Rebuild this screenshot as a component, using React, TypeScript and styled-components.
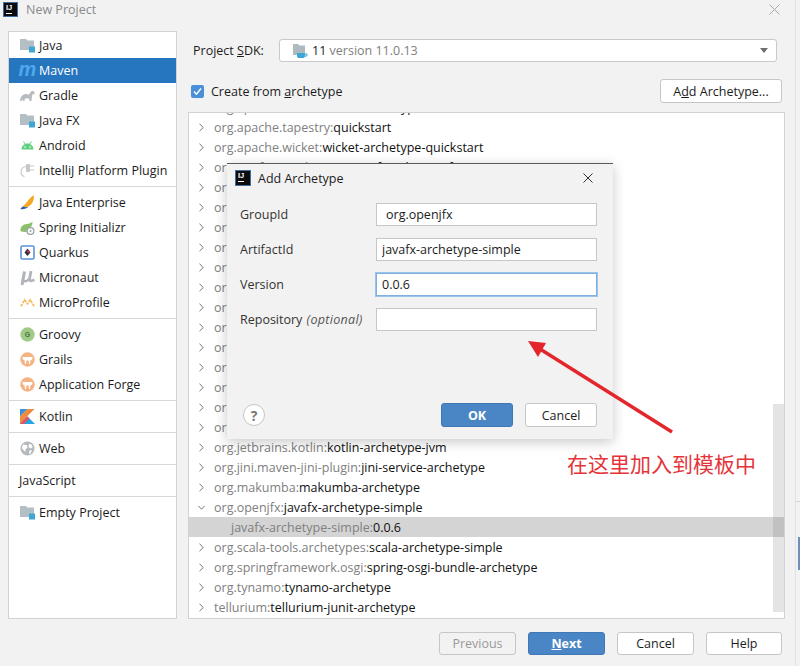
import React from "react";
import styled, { createGlobalStyle } from "styled-components";

const GlobalStyle = createGlobalStyle`
  html, body {
    margin: 0;
    padding: 0;
    background: #f2f2f2;
  }
  body {
    font-family: "Open Sans", "Noto Sans", "Noto Sans CJK SC", sans-serif;
    font-size: 12.5px;
    color: #1c1c1c;
  }
`;

const Page = styled.div`
  position: relative;
  display: flex;
  width: 800px;
  height: 666px;
  overflow: hidden;
`;
const Win = styled.div`
  width: 795px;
  flex: none;
  display: flex;
  flex-direction: column;
  border-right: 1px solid #e2e2e2;
`;
const Edge = styled.div`
  flex: 1;
  background:
    linear-gradient(#6f8fb8, #6f8fb8) right 537px / 2px 33px no-repeat,
    linear-gradient(#d6d6d6, #d6d6d6) 0 501px / 100% 1px no-repeat;
`;
const TitleBar = styled.div`
  height: 31px;
  flex: none;
  display: flex;
  align-items: flex-start;
  padding: 2px 0 0 3px;
  box-sizing: border-box;
  justify-content: space-between;
`;
const TitleLeft = styled.div`
  display: flex;
  align-items: center;
  gap: 8px;
  color: #8a8a8a;
  line-height: 14px;
`;
const CloseBtn = styled.svg`
  width: 11px;
  height: 11px;
  margin: 2px 15px 0 0;
`;
const LogoBox = styled.div`
  width: 15px;
  height: 15px;
  box-sizing: border-box;
  background: #0c0c10;
  border: 1px solid #3f6f9f;
  color: #fff;
  font: bold 7.5px/7px "Liberation Sans", sans-serif;
  padding: 1px 0 0 2px;
  flex: none;
  &::after {
    content: "";
    display: block;
    width: 6px;
    height: 1px;
    background: #fff;
    margin-top: 2px;
  }
`;
const Body = styled.div`
  display: flex;
  height: 588px;
  flex: none;
  padding-left: 8px;
`;
const Sidebar = styled.div`
  width: 169px;
  box-sizing: border-box;
  background: #fff;
  border: 1px solid #d2d2d2;
  padding-top: 1px;
`;
const SideRow = styled.div<{ $active?: boolean; $plain?: boolean }>`
  height: 25px;
  display: flex;
  align-items: center;
  padding-left: ${(p) => (p.$plain ? "10px" : "11px")};
  background: ${(p) => (p.$active ? "#2675bf" : "transparent")};
  color: ${(p) => (p.$active ? "#fff" : "#1c1c1c")};
`;
const IconSlot = styled.span`
  width: 15px;
  height: 15px;
  margin-right: 4px;
  display: inline-flex;
  align-items: center;
  justify-content: center;
`;
const SideSep = styled.div`
  height: 1px;
  background: #d8d8d8;
  margin: 3px 0;
`;
const Main = styled.div`
  flex: 1;
  display: flex;
  flex-direction: column;
  padding: 8px 10px 0 11px;
  min-width: 0;
`;
const SdkRow = styled.div`
  display: flex;
  align-items: center;
  height: 23px;
  flex: none;
  padding: 0 8px 0 5px;
`;
const SdkLabel = styled.span`
  width: 86px;
`;
const Combo = styled.div`
  flex: 1;
  height: 23px;
  box-sizing: border-box;
  background: #fff;
  border: 1px solid #c9c9c9;
  border-radius: 3px;
  display: flex;
  align-items: center;
  padding: 0 8px 0 13px;
  gap: 4px;
`;
const Muted = styled.span`
  color: #808080;
`;
const ComboCaret = styled.span`
  margin-left: auto;
  width: 0;
  height: 0;
  border-left: 4px solid transparent;
  border-right: 4px solid transparent;
  border-top: 5px solid #6e6e6e;
`;
const ArchetypeRow = styled.div`
  display: flex;
  align-items: center;
  justify-content: space-between;
  margin-top: 17px;
  height: 24px;
  flex: none;
  padding: 0 3px 0 3px;
`;
const CheckLabel = styled.label`
  display: flex;
  align-items: center;
  gap: 7px;
`;
const CheckBox = styled.span`
  width: 13px;
  height: 13px;
  border-radius: 2px;
  background: #4a90d9;
  display: inline-flex;
  align-items: center;
  justify-content: center;
`;
const Button = styled.div<{ $primary?: boolean; $disabled?: boolean; $w?: number; $h?: number }>`
  width: ${(p) => p.$w ?? 77}px;
  height: ${(p) => p.$h ?? 23}px;
  box-sizing: border-box;
  border-radius: 3px;
  display: flex;
  align-items: center;
  justify-content: center;
  background: ${(p) => (p.$primary ? "#4a86c5" : p.$disabled ? "#f2f2f2" : "#fff")};
  border: 1px solid ${(p) => (p.$primary ? "#3f78b4" : "#c6c6c6")};
  color: ${(p) => (p.$primary ? "#fff" : p.$disabled ? "#9a9a9a" : "#1c1c1c")};
  font-weight: ${(p) => (p.$primary ? 700 : 400)};
`;
const ListBox = styled.div`
  position: relative;
  margin-top: 9px;
  flex: 1;
  min-height: 0;
  box-sizing: border-box;
  background: #fff;
  border: 1px solid #d2d2d2;
  overflow: hidden;
`;
const ListInner = styled.div`
  margin-top: -16px;
`;
const TreeRow = styled.div<{ $selected?: boolean; $child?: boolean }>`
  height: 20px;
  display: flex;
  align-items: center;
  white-space: nowrap;
  padding-left: ${(p) => (p.$child ? "42px" : "9px")};
  background: ${(p) => (p.$selected ? "#d4d4d4" : "transparent")};
`;
const Chevron = styled.svg`
  width: 7px;
  height: 9px;
  margin-right: 9px;
  flex: none;
`;
const Group = styled.span`
  color: #808080;
`;
const Art = styled.span`
  color: #111;
`;
const ScrollThumb = styled.div`
  position: absolute;
  right: 0;
  top: 291px;
  width: 11px;
  height: 208px;
  background: rgba(120, 120, 120, 0.2);
`;
const Footer = styled.div`
  display: flex;
  justify-content: flex-end;
  margin-top: 13px;
  padding-right: 13px;
  gap: 12px;
`;
const Dialog = styled.div`
  position: absolute;
  left: 227px;
  top: 163px;
  width: 386px;
  height: 276px;
  box-sizing: border-box;
  background: #f2f2f2;
  border-top: 1px solid #5a5a5a;
  box-shadow: 0 3px 12px rgba(0, 0, 0, 0.22);
  display: flex;
  flex-direction: column;
  padding: 0 16px 12px 13px;
`;
const DialogTitle = styled.div`
  height: 39px;
  flex: none;
  display: flex;
  align-items: center;
  gap: 7px;
  margin-left: -5px;
  padding-bottom: 11px;
  box-sizing: border-box;
  justify-content: flex-start;
`;
const DialogLogo = styled(LogoBox)`
  width: 16px;
  height: 16px;
`;
const DialogClose = styled.svg`
  width: 10px;
  height: 10px;
  margin-left: auto;
  margin-right: 4px;
`;
const FormGrid = styled.div`
  display: grid;
  grid-template-columns: 136px 1fr;
  grid-auto-rows: 23px;
  row-gap: 12px;
  align-items: center;
`;
const FieldLabel = styled.span`
  color: #333;
  white-space: nowrap;
`;
const Optional = styled.i`
  color: #555;
  margin-left: 1px;
  letter-spacing: 0.3px;
`;
const Field = styled.input<{ $focused?: boolean; $inset?: number }>`
  box-sizing: border-box;
  width: 100%;
  height: 23px;
  border: 1px solid ${(p) => (p.$focused ? "#7fb0e0" : "#c6c6c6")};
  box-shadow: ${(p) => (p.$focused ? "0 0 0 1px #9cc3ea" : "none")};
  outline: none;
  background: #fff;
  padding: 0 0 0 ${(p) => p.$inset ?? 5}px;
  font: inherit;
  color: #1c1c1c;
`;
const DialogFooter = styled.div`
  margin-top: auto;
  display: flex;
  align-items: center;
  gap: 12px;
`;
const HelpRound = styled.div`
  width: 22px;
  height: 22px;
  box-sizing: border-box;
  margin: 0 auto 0 3px;
  border-radius: 50%;
  background: #fff;
  border: 1px solid #c6c6c6;
  color: #777;
  font-weight: 700;
  font-size: 14px;
  display: flex;
  align-items: center;
  justify-content: center;
`;
const ArrowSvg = styled.svg`
  position: absolute;
  left: 520px;
  top: 335px;
  width: 160px;
  height: 105px;
`;
const Note = styled.div`
  position: absolute;
  left: 567px;
  top: 449px;
  font-family: "Noto Sans CJK SC", sans-serif;
  font-size: 21px;
  line-height: 28px;
  color: #e5333a;
  white-space: nowrap;
`;
const MavenMark = styled.span`
  font: italic bold 20px/15px "Liberation Sans", sans-serif;
  color: #4fa8ee;
  margin-top: -3px;
`;

const FolderIcon = () => (
  <svg width="15" height="15" viewBox="0 0 15 15">
    <path d="M0 1h6l1.500 1.500H14V12H0z" fill="#b4bec5" />
    <rect x="9" y="8.500" width="6" height="6" fill="#3fa7d6" />
  </svg>
);
const GradleIcon = () => (
  <svg width="15" height="15" viewBox="0 0 15 15">
    <path d="M0 13C.5 8 3 6 6 6c1 0 1.500.5 3 .5C10 5 11 2.500 13 3c1.500.5 2 2 1.500 3-1 .3-1.500 0-2 .3-.5 1.500-.8 4-1 6.700H9.500L9 10.500H5L4.500 13H3L2.700 11 1.500 13z" fill="#b7bcc0" />
  </svg>
);
const AndroidIcon = () => (
  <svg width="15" height="15" viewBox="0 0 15 15">
    <path d="M1.500 11.500C1.700 8 4 5.500 7.500 5.500s5.800 2.500 6 6z" fill="#5fd07f" />
    <path d="M3.500 3.500l1.700 2.500M11.500 3.500L9.800 6" stroke="#5fd07f" strokeWidth="1" />
    <circle cx="5" cy="9" r=".8" fill="#fff" />
    <circle cx="10" cy="9" r=".8" fill="#fff" />
  </svg>
);
const PluginIcon = () => (
  <svg width="15" height="15" viewBox="0 0 15 15" fill="none">
    <path d="M6 3.500C2.500 4 1 6.500 1 9c0 2.500 1.500 4 3.500 4.500" stroke="#c4c8cb" strokeWidth="1.200" />
    <rect x="6" y="1" width="4" height="8" rx="1" fill="#c4c8cb" />
    <path d="M10 3h4M10 7h4" stroke="#c4c8cb" strokeWidth="1.200" />
  </svg>
);
const EnterpriseIcon = () => (
  <svg width="15" height="15" viewBox="0 0 15 15">
    <path d="M13.500 0C14.500 4 13 9 8.500 11.500 6 12.500 4 12 2.500 11.500 6 9 9 3.500 13.500 0z" fill="#f5a623" />
    <path d="M3 11.500c2 1 4 .8 5.500.3C6.500 14 3 14.500.5 14c.5-1 1.500-2 2.500-2.500z" fill="#2f5fa8" />
  </svg>
);
const SpringIcon = () => (
  <svg width="15" height="15" viewBox="0 0 15 15">
    <path d="M.5 11C0 7 3 4 7 4c2 0 4-1 5.500-2.500C12.500 4 12 5.500 11 7c-2 0-4 1.500-4.500 5-2.500 0-5-.3-6-1z" fill="#8cc06c" />
    <circle cx="10.500" cy="11" r="3.400" fill="#fff" stroke="#9aa2a8" strokeWidth="1.300" />
    <circle cx="10.500" cy="11" r="1" fill="#9aa2a8" />
  </svg>
);
const QuarkusIcon = () => (
  <svg width="15" height="15" viewBox="0 0 15 15">
    <rect x="1" y="1" width="13" height="13" rx="1.500" fill="#fff" stroke="#5a93d6" strokeWidth="1.600" />
    <path d="M7.500 3.500l3 4-3 3.500-3-3.500z" fill="#30303c" />
    <circle cx="8.500" cy="6.500" r="1.300" fill="#d8344a" />
  </svg>
);
const MicronautIcon = () => (
  <svg width="15" height="16" viewBox="0 0 15 16" fill="none">
    <path d="M4.500 1.500L2 15" stroke="#b1b5b9" strokeWidth="3" />
    <path d="M3.500 10.500c2 1.500 4 .8 5-1.500" stroke="#b1b5b9" strokeWidth="2.400" />
    <path d="M11 1L9.500 9c-.3 2 1.500 2.500 5 .8" stroke="#b1b5b9" strokeWidth="2.800" />
  </svg>
);
const MicroProfileIcon = () => (
  <svg width="16" height="15" viewBox="0 0 16 15" fill="none">
    <path d="M1 11.500L5 4.500 8 9 11 4.500l4 7" stroke="#f4bb55" strokeWidth="1.700" strokeDasharray="3 1" />
  </svg>
);
const GroovyIcon = () => (
  <svg width="15" height="15" viewBox="0 0 15 15">
    <circle cx="7.500" cy="7.500" r="7.200" fill="#9fcb87" />
    <text x="7.500" y="10" textAnchor="middle" fontSize="7" fontWeight="700" fill="#4d6b45" fontFamily="Liberation Sans">G</text>
  </svg>
);
const GrailsIcon = () => (
  <svg width="15" height="15" viewBox="0 0 15 15">
    <circle cx="7.500" cy="7.500" r="7.200" fill="#f5b283" />
    <path d="M2.500 5h10c.2 2-.5 3-2 3.300L10 12H9l-.4-3.500H6.400L6 12H5l-.5-3.700C3 8 2.300 7 2.500 5z" fill="#fff" />
  </svg>
);
const KotlinIcon = () => (
  <svg width="15" height="15" viewBox="0 0 15 15">
    <path d="M0 0h7.500L0 7.500z" fill="#3d8fd8" />
    <path d="M7.500 0H14.500L0 14.500V7.500z" fill="#f08a3c" />
    <path d="M0 15L7.500 7.500 15 15z" fill="#22a4e8" />
    <path d="M0 14.500L7.300 7.200 9.500 9.500 4 15H0z" fill="#e0565f" />
  </svg>
);
const WebIcon = () => (
  <svg width="15" height="15" viewBox="0 0 15 15">
    <circle cx="7.500" cy="7.500" r="7" fill="#b3b9bd" />
    <path d="M3 3.500l4 .5.500 3-2 1v3L3 8.500 1.800 7zM9 2.500l3 1.500.5 2.500-2 1-2-1.500zM9.500 9.500l2.500-.5-1.500 3.500-1.500.5z" fill="#fff" />
  </svg>
);
const SdkIcon = () => (
  <svg width="15" height="16" viewBox="0 0 15 16">
    <path d="M0 1h5l1.500 1.500H12V12H0z" fill="#aeb9c0" />
    <path d="M4 10h8v3c0 1.500-1 2-2 2H6c-1 0-2-.5-2-2z" fill="#3fa7d6" />
    <path d="M12 11h2v2h-2" fill="none" stroke="#3fa7d6" />
  </svg>
);

const ChevronRight = () => (
  <Chevron viewBox="0 0 7 9" fill="none">
    <path d="M1.500 .8L5.300 4.500 1.500 8.200" stroke="#757575" strokeWidth="1" />
  </Chevron>
);
const ChevronDown = () => (
  <Chevron viewBox="0 0 7 9" fill="none">
    <path d="M.3 2.800L3.500 6.200 6.700 2.800" stroke="#757575" strokeWidth="1" />
  </Chevron>
);

const sideGroups: { icon?: React.ReactNode; name: string; active?: boolean }[][] = [
  [
    { icon: <FolderIcon />, name: "Java" },
    { icon: <MavenMark>m</MavenMark>, name: "Maven", active: true },
    { icon: <GradleIcon />, name: "Gradle" },
    { icon: <FolderIcon />, name: "Java FX" },
    { icon: <AndroidIcon />, name: "Android" },
    { icon: <PluginIcon />, name: "IntelliJ Platform Plugin" },
  ],
  [
    { icon: <EnterpriseIcon />, name: "Java Enterprise" },
    { icon: <SpringIcon />, name: "Spring Initializr" },
    { icon: <QuarkusIcon />, name: "Quarkus" },
    { icon: <MicronautIcon />, name: "Micronaut" },
    { icon: <MicroProfileIcon />, name: "MicroProfile" },
  ],
  [
    { icon: <GroovyIcon />, name: "Groovy" },
    { icon: <GrailsIcon />, name: "Grails" },
    { icon: <GrailsIcon />, name: "Application Forge" },
  ],
  [{ icon: <KotlinIcon />, name: "Kotlin" }],
  [{ icon: <WebIcon />, name: "Web" }],
  [{ name: "JavaScript" }],
  [{ icon: <FolderIcon />, name: "Empty Project" }],
];

const treeRows: [string, string][] = [
  ["org.apache.struts", "struts2-archetype-starter"],
  ["org.apache.tapestry", "quickstart"],
  ["org.apache.wicket", "wicket-archetype-quickstart"],
  ["org.appfuse.archetypes", "appfuse-basic-jsf"],
  ["org.appfuse.archetypes", "appfuse-basic-spring"],
  ["org.appfuse.archetypes", "appfuse-basic-struts"],
  ["org.appfuse.archetypes", "appfuse-basic-tapestry"],
  ["org.appfuse.archetypes", "appfuse-core"],
  ["org.appfuse.archetypes", "appfuse-modular-jsf"],
  ["org.appfuse.archetypes", "appfuse-modular-spring"],
  ["org.appfuse.archetypes", "appfuse-modular-struts"],
  ["org.appfuse.archetypes", "appfuse-modular-tapestry"],
  ["org.codehaus.gmaven.archetypes", "gmaven-archetype-basic"],
  ["org.codehaus.gmaven.archetypes", "gmaven-archetype-mojo"],
  ["org.fusesource.scalate.tooling", "scalate-archetype-empty"],
  ["org.fusesource.scalate.tooling", "scalate-archetype-guice"],
  ["org.grails", "grails-archetype"],
  ["org.jetbrains.kotlin", "kotlin-archetype-jvm"],
  ["org.jini.maven-jini-plugin", "jini-service-archetype"],
  ["org.makumba", "makumba-archetype"],
];
const afterRows: [string, string][] = [
  ["org.scala-tools.archetypes", "scala-archetype-simple"],
  ["org.springframework.osgi", "spring-osgi-bundle-archetype"],
  ["org.tynamo", "tynamo-archetype"],
  ["tellurium", "tellurium-junit-archetype"],
];

export default function App() {
  return (
    <Page>
      <GlobalStyle />
      <Win>
        <TitleBar>
          <TitleLeft>
            <LogoBox>IJ</LogoBox>
            New Project
          </TitleLeft>
          <CloseBtn viewBox="0 0 11 11">
            <path d="M.5 .5l10 10M10.500 .5l-10 10" stroke="#a8a8a8" strokeWidth="1" />
          </CloseBtn>
        </TitleBar>
        <Body>
          <Sidebar>
            {sideGroups.map((group, i) => (
              <React.Fragment key={i}>
                {i > 0 && <SideSep />}
                {group.map((item) => (
                  <SideRow key={item.name} $active={item.active} $plain={!item.icon}>
                    {item.icon && <IconSlot>{item.icon}</IconSlot>}
                    {item.name}
                  </SideRow>
                ))}
              </React.Fragment>
            ))}
          </Sidebar>
          <Main>
            <SdkRow>
              <SdkLabel>
                Project <u>S</u>DK:
              </SdkLabel>
              <Combo>
                <SdkIcon />
                <span>
                  11 <Muted>version 11.0.13</Muted>
                </span>
                <ComboCaret />
              </Combo>
            </SdkRow>
            <ArchetypeRow>
              <CheckLabel>
                <CheckBox>
                  <svg width="9" height="9" viewBox="0 0 9 9" fill="none">
                    <path d="M1 4.500L3.500 7.200 8 1.500" stroke="#fff" strokeWidth="1.500" />
                  </svg>
                </CheckBox>
                <span>
                  Create from <u>a</u>rchetype
                </span>
              </CheckLabel>
              <Button $w={122} $h={24}>
                <span>
                  A<u>d</u>d Archetype...
                </span>
              </Button>
            </ArchetypeRow>
            <ListBox>
              <ListInner>
                {treeRows.map(([g, a], i) => (
                  <TreeRow key={i}>
                    <ChevronRight />
                    <Group>{g}:</Group>
                    <Art>{a}</Art>
                  </TreeRow>
                ))}
                <TreeRow>
                  <ChevronDown />
                  <Group>org.openjfx:</Group>
                  <Art>javafx-archetype-simple</Art>
                </TreeRow>
                <TreeRow $selected $child>
                  <Group>javafx-archetype-simple:</Group>
                  <Art>0.0.6</Art>
                </TreeRow>
                {afterRows.map(([g, a]) => (
                  <TreeRow key={g}>
                    <ChevronRight />
                    <Group>{g}:</Group>
                    <Art>{a}</Art>
                  </TreeRow>
                ))}
              </ListInner>
              <ScrollThumb />
            </ListBox>
          </Main>
        </Body>
        <Footer>
          <Button $disabled>Previous</Button>
          <Button $primary>
            <span>
              <u>N</u>ext
            </span>
          </Button>
          <Button>Cancel</Button>
          <Button $w={76}>Help</Button>
        </Footer>
      </Win>
      <Edge />
      <Dialog>
        <DialogTitle>
          <DialogLogo>IJ</DialogLogo>
          Add Archetype
          <DialogClose viewBox="0 0 10 10">
            <path d="M.5 .5l9 9M9.500 .5l-9 9" stroke="#333" strokeWidth="1" />
          </DialogClose>
        </DialogTitle>
        <FormGrid>
          <FieldLabel>GroupId</FieldLabel>
          <Field readOnly defaultValue="org.openjfx" $inset={9} />
          <FieldLabel>ArtifactId</FieldLabel>
          <Field readOnly defaultValue="javafx-archetype-simple" />
          <FieldLabel>Version</FieldLabel>
          <Field readOnly defaultValue="0.0.6" $focused />
          <FieldLabel>
            Repository <Optional>(optional)</Optional>
          </FieldLabel>
          <Field readOnly />
        </FormGrid>
        <DialogFooter>
          <HelpRound>?</HelpRound>
          <Button $primary $w={72} $h={24}>
            OK
          </Button>
          <Button $w={72} $h={24}>
            Cancel
          </Button>
        </DialogFooter>
      </Dialog>
      <ArrowSvg viewBox="0 0 160 105">
        <path d="M152 97L20 14" stroke="#e3262c" strokeWidth="3.500" />
        <path d="M8 6L26 8 18 22z" fill="#e3262c" />
      </ArrowSvg>
      <Note>在这里加入到模板中</Note>
    </Page>
  );
}
